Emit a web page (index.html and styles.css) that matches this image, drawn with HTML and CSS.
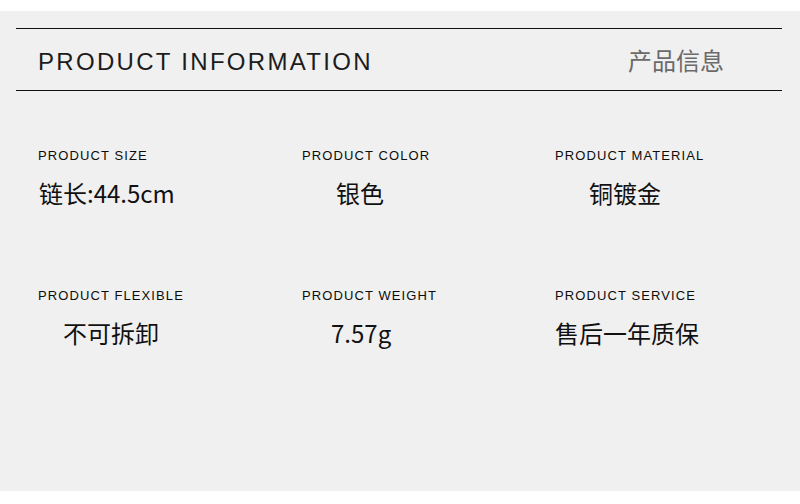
FILE: index.html
```html
<!DOCTYPE html>
<html lang="zh">
<head>
<meta charset="utf-8">
<title>Product Information</title>
<link rel="stylesheet" href="styles.css">
</head>
<body>
<div class="panel">
  <header class="header">
    <h1 class="title">PRODUCT INFORMATION</h1>
    <div class="subtitle">产品信息</div>
  </header>
  <div class="specs">
    <div class="spec">
      <div class="label">PRODUCT SIZE</div>
      <div class="value">链长:44.5cm</div>
    </div>
    <div class="spec">
      <div class="label">PRODUCT COLOR</div>
      <div class="value indent-lg">银色</div>
    </div>
    <div class="spec">
      <div class="label">PRODUCT MATERIAL</div>
      <div class="value indent-lg">铜镀金</div>
    </div>
    <div class="spec">
      <div class="label">PRODUCT FLEXIBLE</div>
      <div class="value indent-md">不可拆卸</div>
    </div>
    <div class="spec">
      <div class="label">PRODUCT WEIGHT</div>
      <div class="value indent-sm">7.57g</div>
    </div>
    <div class="spec">
      <div class="label">PRODUCT SERVICE</div>
      <div class="value indent-none">售后一年质保</div>
    </div>
  </div>
</div>
</body>
</html>
```
FILE: styles.css
```css
html, body {
  margin: 0;
  padding: 0;
  background: #ffffff;
}
body {
  width: 800px;
  height: 504px;
  overflow: hidden;
  font-family: "Liberation Sans", "Noto Sans CJK SC", sans-serif;
}
.panel {
  margin-top: 11px;
  height: 480px;
  background: #f0f0f0;
  padding-top: 17px;
  box-sizing: border-box;
}
.header {
  margin: 0 18px 0 16px;
  border-top: 1px solid #111;
  border-bottom: 1px solid #111;
  height: 61px;
  display: flex;
  align-items: center;
  justify-content: space-between;
  padding: 0 58px 0 22px;
}
.title {
  margin: 0;
  font-family: "Liberation Sans", sans-serif;
  font-weight: normal;
  font-size: 24px;
  letter-spacing: 2.3px;
  color: #1c1c1c;
  line-height: 30px;
  padding-top: 4px;
}
.subtitle {
  font-family: "Noto Sans CJK SC", sans-serif;
  font-size: 24px;
  color: #6a6a6a;
  line-height: 30px;
  padding-top: 0;
}
.specs {
  display: grid;
  grid-template-columns: 264px 253px 1fr;
  row-gap: 80px;
  padding: 57px 0 0 38px;
}
.spec {
  display: flex;
  flex-direction: column;
  gap: 14px;
}
.label {
  font-family: "Liberation Sans", sans-serif;
  font-size: 13px;
  line-height: 16px;
  letter-spacing: 1.1px;
  color: #0d0d0d;
}
.value {
  font-family: "Noto Sans CJK SC", sans-serif;
  font-size: 24px;
  line-height: 30px;
  color: #111;
  padding-left: 1px;
}
.indent-lg { padding-left: 34px; }
.indent-md { padding-left: 25px; }
.indent-sm { padding-left: 29px; }
.indent-none { padding-left: 0; }
```
